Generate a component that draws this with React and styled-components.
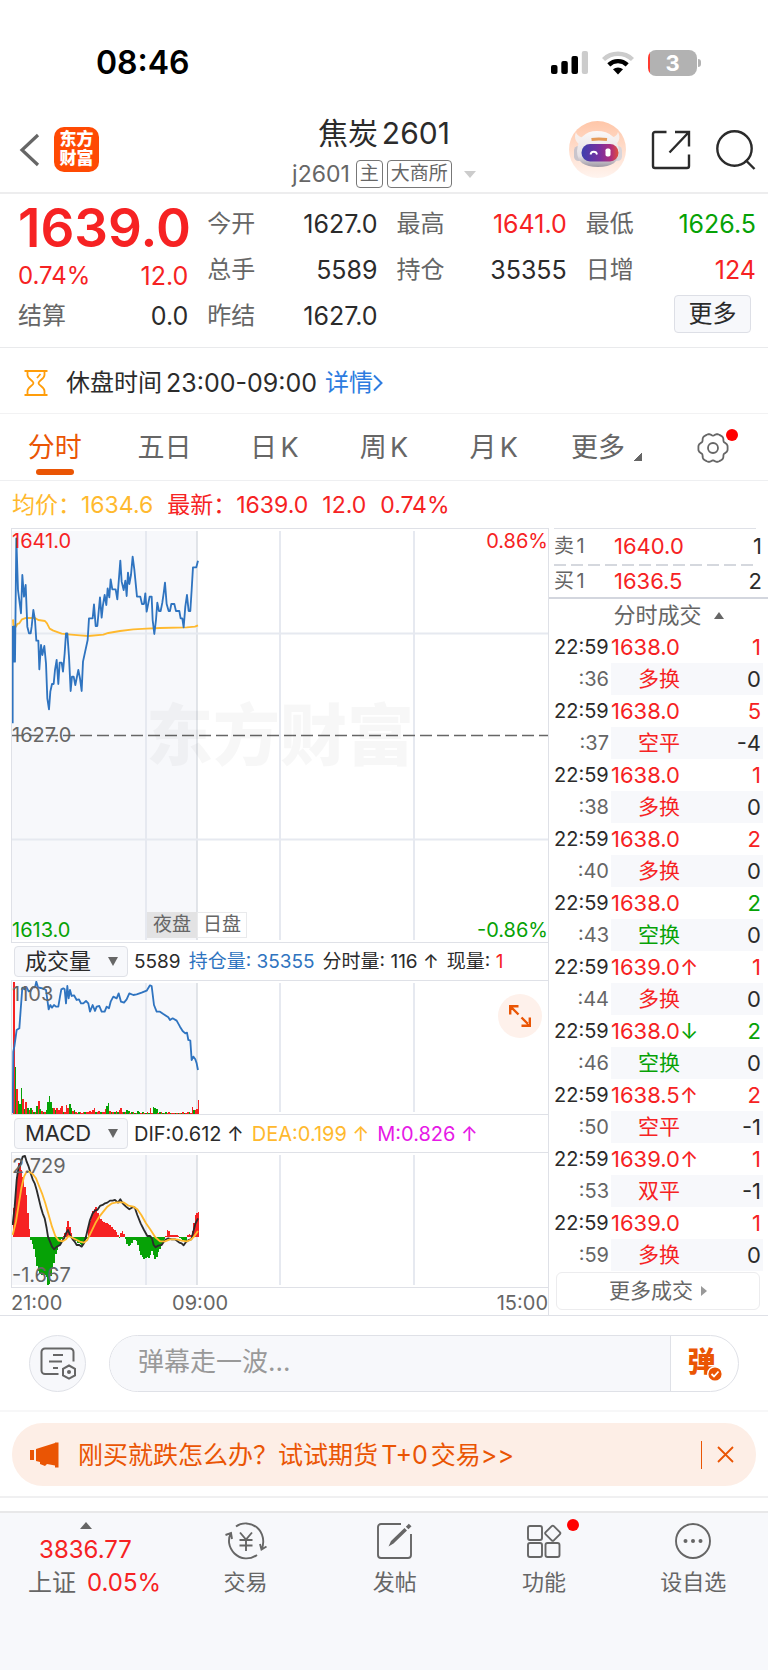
import React from "react";
import styled, { createGlobalStyle } from "styled-components";

const RED = "#f62223";
const GREEN = "#06a206";
const ORANGE = "#ea5504";
const BLUE = "#2f74c0";
const YELLOW = "#ffb92e";
const DARK = "#2b2b2b";
const GREY = "#666666";
const LINE = "#dfe1e7";
const GRID = "#e6e9f0";
const SHADE = "#f7f8fb";

const GlobalStyle = createGlobalStyle`
    * {
        box-sizing: border-box;
    }

    body {
        margin: 0;
        background: #ffffff;
        color: ${DARK};
        font-family: Inter, "Noto Sans CJK SC", sans-serif;
        font-size: 24px;
        text-autospace: normal;
    }

    button, input, select {
        font: inherit;
        color: inherit;
        margin: 0;
        padding: 0;
        border: 0;
        background: none;
    }

    a {
        color: inherit;
        text-decoration: none;
    }

    svg {
        display: block;
    }
`;

const Page = styled.div`
    display: flex;
    flex-direction: column;
    min-height: 100vh;
`;

/* status bar */

const StatusBar = styled.div`
    display: flex;
    align-items: center;
    justify-content: space-between;
    height: 101px;
    padding: 24px 67px 0 96px;
    color: #000000;
`;

const Clock = styled.div`
    font-size: 32px;
    font-weight: 600;
    line-height: 38px;
`;

const StatusIcons = styled.div`
    display: flex;
    align-items: center;
    gap: 14px;
`;

const Battery = styled.div`
    width: 49px;
    height: 26px;
    border-radius: 8px;
    overflow: hidden;
    background: linear-gradient(to right, #ff3b30 2px, #b2b2b2 2px);
    color: #ffffff;
    font-size: 22px;
    font-weight: 700;
    line-height: 26px;
    text-align: center;
`;

const BatteryGroup = styled.div`
    display: flex;
    align-items: center;
    gap: 1px;

    &::after {
        content: "";
        width: 3px;
        height: 8px;
        border-radius: 0 3px 3px 0;
        background: #b2b2b2;
    }
`;

/* header */

const Header = styled.header`
    display: grid;
    grid-template-columns: 1fr auto 1fr;
    height: 93px;
    padding: 0 12px;
    border-bottom: 2px solid #ededee;
`;

const HeaderSide = styled.div`
    display: flex;
    align-items: center;
    justify-content: ${(p) => (p.$end ? "flex-end" : "flex-start")};
    gap: ${(p) => (p.$end ? "25px" : "13px")};
    padding: 3px 0 0 6px;
`;

const IconButton = styled.button`
    display: block;
    cursor: pointer;
`;

const Logo = styled.div`
    width: 45px;
    height: 45px;
    border-radius: 10px;
    background: #ff4a03;
    color: #ffffff;
    font-size: 17px;
    font-weight: 900;
    line-height: 19px;
    padding: 3px 5px;
    text-align: center;
`;

const TitleBlock = styled.div`
    display: flex;
    flex-direction: column;
    align-items: center;
    padding-top: 12px;
`;

const Title = styled.h1`
    margin: 0;
    font-size: 30px;
    font-weight: 400;
    line-height: 40px;
`;

const SubTitle = styled.div`
    display: flex;
    align-items: center;
    gap: 4px;
    height: 42px;
    color: ${GREY};
    font-size: 23px;

    span:first-child {
        margin-right: 2px;
    }

    i {
        margin-left: 8px;
    }
`;

const Tag = styled.span`
    border: 1px solid #777777;
    border-radius: 4px;
    padding: 0 3px;
    font-size: 19px;
    line-height: 26px;
`;

const Triangle = styled.i`
    display: inline-block;
    width: 0;
    height: 0;
    border: ${(p) => p.$size || 5}px solid transparent;
    ${(p) =>
        p.$dir === "up" &&
        `border-top: 0; border-bottom: ${p.$long || 7}px solid ${p.$color || GREY};`}
    ${(p) =>
        p.$dir === "down" &&
        `border-bottom: 0; border-top: ${p.$long || 7}px solid ${p.$color || GREY};`}
    ${(p) =>
        p.$dir === "right" &&
        `border-right: 0; border-left: ${p.$long || 6}px solid ${p.$color || GREY};`}
`;

/* quote */

const Quote = styled.section`
    display: grid;
    grid-template-columns: repeat(4, minmax(0, 1fr));
    gap: 0 19px;
    height: 154px;
    padding: 7px 12px 0 18px;
    border-bottom: 1px solid #e9eaec;
`;

const QuoteColumn = styled.div`
    display: flex;
    flex-direction: column;
`;

const Price = styled.div`
    color: ${RED};
    font-size: 53px;
    font-weight: 600;
    line-height: 55px;
    white-space: nowrap;
`;

const Pair = styled.div`
    display: flex;
    align-items: center;
    justify-content: space-between;
    height: ${(p) => p.$height || 46}px;
    line-height: 32px;
    color: ${(p) => p.$color || DARK};

    span:first-child {
        color: ${(p) => p.$labelColor || GREY};
    }

    span:last-child {
        font-size: 25px;
    }
`;

const MoreButton = styled.button`
    align-self: flex-end;
    width: 77px;
    height: 38px;
    margin: 2px 5px 0 0;
    border: 1px solid #dddfe6;
    border-radius: 4px;
    background: ${SHADE};
    line-height: 34px;
`;

/* market notice */

const Notice = styled.div`
    display: flex;
    align-items: center;
    height: 66px;
    padding: 4px 24px 0;
    border-bottom: 1px solid #f2f2f3;
    line-height: 36px;

    svg {
        margin-right: 18px;
    }

    time {
        margin-left: 4px;
        font-size: 25px;
    }

    a {
        display: flex;
        align-items: center;
        margin-left: 8px;
        color: #2d7ce0;
    }

    a svg {
        margin: 0;
    }
`;

/* period tabs */

const Tabs = styled.nav`
    display: grid;
    grid-template-columns: repeat(7, 1fr);
    height: 67px;
    border-bottom: 1px solid #eeeff1;
`;

const Tab = styled.button`
    position: relative;
    display: flex;
    align-items: center;
    justify-content: center;
    gap: 9px;
    padding-top: 1px;
    color: ${(p) => (p.$active ? ORANGE : GREY)};
    font-size: 27px;
    line-height: 36px;

    &::after {
        content: "";
        display: ${(p) => (p.$active ? "block" : "none")};
        position: absolute;
        bottom: 5px;
        width: 38px;
        height: 6px;
        border-radius: 3px;
        background: ${ORANGE};
    }
`;

const Corner = styled.i`
    width: 8px;
    height: 8px;
    margin: 18px -6px 0 0;
    background: linear-gradient(135deg, transparent 50%, ${GREY} 50%);
`;

const Dot = styled.i`
    position: absolute;
    top: ${(p) => p.$top}px;
    left: calc(50% + ${(p) => p.$shift}px);
    width: 12px;
    height: 12px;
    border-radius: 6px;
    background: #ff0000;
`;

const Legend = styled.div`
    display: flex;
    align-items: center;
    gap: 14px;
    height: 47px;
    padding-left: 12px;
    color: ${RED};
    font-size: 23px;
    line-height: 30px;

    span:first-child {
        color: ${YELLOW};
    }
`;

/* charts */

const Board = styled.main`
    display: flex;
    border-bottom: 1px solid ${LINE};
`;

const Charts = styled.div`
    flex: 1;
    min-width: 0;
    padding-left: 11px;
    border-right: 1px solid ${LINE};
`;

const Plot = styled.div`
    position: relative;
    height: ${(p) => p.$height}px;
    border: 1px solid ${LINE};
    border-width: 1px 0 1px 1px;

    > svg {
        width: 100%;
        height: 100%;
    }
`;

const Mark = styled.span`
    position: absolute;
    ${(p) => (p.$bottom ? "bottom" : "top")}: ${(p) => p.$offset || 0}px;
    ${(p) => (p.$right ? "right: 0" : "left: 0")};
    color: ${(p) => p.$color || GREY};
    font-size: 20px;
    line-height: 24px;
`;

const Watermark = styled.div`
    position: absolute;
    top: 162px;
    left: 25%;
    color: rgba(0, 0, 0, 0.03);
    font-size: 67px;
    font-weight: 900;
    line-height: 90px;
    pointer-events: none;
`;

const Sessions = styled.div`
    position: absolute;
    left: 25%;
    bottom: 4px;
    display: flex;
    margin-left: 1px;
    color: ${GREY};
    font-size: 19px;
    line-height: 24px;

    span {
        padding: 0 5px;
        border: 1px solid #e9eaec;
        background: #ffffff;
    }

    span:first-child {
        border-color: #e3e3e4;
        background: #e3e3e4;
    }
`;

const IndicatorBar = styled.div`
    display: flex;
    align-items: center;
    gap: 6px;
    height: 37px;
    padding-left: 3px;
`;

const Readings = styled.div`
    display: flex;
    gap: 8px;
    font-size: ${(p) => (p.$large ? 20 : 19)}px;
    line-height: 28px;
    white-space: nowrap;
`;

const Picker = styled.label`
    position: relative;
    flex: none;
    width: 114px;
    height: 31px;

    select {
        width: 100%;
        height: 100%;
        padding-left: 10px;
        appearance: none;
        border: 1px solid ${LINE};
        border-radius: 4px;
        background: ${SHADE};
        font-size: 22px;
        line-height: 29px;
    }

    i {
        position: absolute;
        top: 11px;
        right: 10px;
    }
`;

const Tone = styled.span`
    color: ${(p) => p.$color || DARK};
`;

const Expand = styled.button`
    position: absolute;
    top: 13px;
    right: 6px;
    display: flex;
    align-items: center;
    justify-content: center;
    width: 44px;
    height: 44px;
    border-radius: 22px;
    background: #fef1eb;
`;

const Axis = styled.div`
    position: relative;
    display: flex;
    justify-content: space-between;
    height: 27px;
    color: ${GREY};
    font-size: 20px;
    line-height: 30px;

    span:nth-child(2) {
        position: absolute;
        left: 30%;
    }
`;

/* order book and trades */

const Side = styled.aside`
    display: flex;
    flex-direction: column;
    width: 219px;
`;

const Level = styled.div`
    display: grid;
    grid-template-columns: 60px 1fr auto;
    align-items: center;
    height: ${(p) => (p.$last ? 31 : 36)}px;
    margin: 0 12px 0 5px;
    padding-bottom: 2px;
    border-top: ${(p) => (p.$last ? 0 : 1)}px solid ${LINE};
    color: ${GREY};
    font-size: 20px;
    line-height: 28px;

    strong {
        color: ${RED};
        font-weight: 400;
        font-size: 22px;
    }

    em {
        margin-right: -6px;
        color: ${DARK};
        font-style: normal;
        font-size: 22px;
    }
`;

const Dashes = styled.hr`
    width: 202px;
    height: 2px;
    margin: 0 0 0 5px;
    border: 0;
    background: repeating-linear-gradient(
        to right,
        #d5d8de 0 12px,
        transparent 12px 17px
    );
`;

const TradesTitle = styled.h2`
    display: flex;
    align-items: center;
    justify-content: center;
    gap: 12px;
    height: 34px;
    margin: 0;
    padding-left: 20px;
    border-top: 2px solid #d3d6de;
    color: ${GREY};
    font-size: 22px;
    font-weight: 400;
    line-height: 32px;
`;

const Trades = styled.table`
    width: 209px;
    margin: 0 0 1px 5px;
    border-collapse: collapse;
    table-layout: fixed;
    font-size: 22px;

    td {
        height: 32px;
        padding: 0;
        line-height: 30px;
        white-space: nowrap;
    }

    td:first-child {
        width: 57px;
        font-size: 20px;
    }

    td:last-child {
        width: 32px;
        padding-right: 2px;
        text-align: right;
    }

    tr:nth-child(even) td {
        background: ${SHADE};
    }

    tr:nth-child(even) td:first-child {
        padding-right: 2px;
        background: none;
        color: ${GREY};
        text-align: right;
    }

    tr:nth-child(even) td:nth-child(2) {
        padding-left: 27px;
        font-size: 21px;
    }
`;

const TradeCell = styled.td`
    color: ${(p) => p.$color || DARK};
`;

const MoreTrades = styled.button`
    display: flex;
    align-items: center;
    justify-content: center;
    gap: 8px;
    height: 38px;
    margin: 0 8px 0 7px;
    border: 1px solid #ececee;
    border-radius: 6px;
    color: ${GREY};
    font-size: 21px;
    line-height: 30px;
`;

/* bullet chat */

const Chat = styled.form`
    display: flex;
    align-items: center;
    gap: 23px;
    height: 96px;
    padding: 0 29px;
    border-bottom: 2px solid #f7f7f8;
`;

const ChatSettings = styled.button`
    display: flex;
    align-items: center;
    justify-content: center;
    width: 57px;
    height: 57px;
    border: 1px solid ${LINE};
    border-radius: 29px;
    background: ${SHADE};
`;

const ChatBox = styled.div`
    flex: 1;
    display: flex;
    height: 57px;
    border: 1px solid ${LINE};
    border-radius: 29px;
    overflow: hidden;

    input {
        flex: 1;
        min-width: 0;
        padding: 0 28px 4px;
        background: ${SHADE};
        font-size: 26px;
        outline: none;
    }

    input::placeholder {
        color: #999999;
        opacity: 1;
    }
`;

const ChatToggle = styled.button`
    position: relative;
    width: 68px;
    padding: 0 6px 2px 0;
    border-left: 1px solid ${LINE};
    color: ${ORANGE};
    font-size: 28px;
    font-weight: 900;
    line-height: 36px;

    svg {
        position: absolute;
        right: 15px;
        bottom: 9px;
    }
`;

/* promotion */

const PromoWrap = styled.div`
    padding: 11px 12px 10px;
    border-bottom: 2px solid #f0f0f1;
`;

const Promo = styled.div`
    display: flex;
    align-items: center;
    height: 63px;
    padding: 0 22px 0 18px;
    border-radius: 31px;
    background: #fdeee6;
    color: ${ORANGE};
    font-size: 25px;

    a {
        flex: 1;
        margin-left: 18px;
        line-height: 36px;
    }

    button {
        padding-left: 15px;
        border-left: 1px solid ${ORANGE};
        height: 28px;
    }
`;

/* bottom navigation */

const BottomNav = styled.nav`
    flex: 1;
    display: grid;
    grid-template-columns: 171px repeat(4, 1fr);
    align-items: start;
    min-height: 160px;
    margin-top: 13px;
    border-top: 2px solid #e8e8e9;
    background: ${SHADE};
`;

const NavItem = styled.a`
    position: relative;
    display: flex;
    flex-direction: column;
    align-items: center;
    padding-top: 9px;
    color: ${GREY};
    font-size: 22px;
    line-height: 32px;

    svg {
        margin-bottom: 6px;
    }
`;

const IndexLine = styled.span`
    padding-left: ${(p) => (p.$label ? 18 : 0)}px;
    font-size: 24px;
    line-height: ${(p) => p.$height}px;
    color: ${(p) => (p.$label ? GREY : RED)};
    white-space: nowrap;

    b {
        margin-left: 8px;
        color: ${RED};
        font-weight: 400;
    }
`;

const quoteColumns = [
    [["今开", "1627.0"], ["总手", "5589"], ["昨结", "1627.0"]],
    [["最高", "1641.0", RED], ["持仓", "35355"]],
    [["最低", "1626.5", GREEN], ["日增", "124", RED]],
];

const periods = ["分时", "五日", "日K", "周K", "月K"];

// [time, price, arrow, volume, volume color, seconds, kind, kind color, change]
const trades = [
    ["22:59", "1638.0", "", "1", RED, ":36", "多换", RED, "0"],
    ["22:59", "1638.0", "", "5", RED, ":37", "空平", RED, "-4"],
    ["22:59", "1638.0", "", "1", RED, ":38", "多换", RED, "0"],
    ["22:59", "1638.0", "", "2", RED, ":40", "多换", RED, "0"],
    ["22:59", "1638.0", "", "2", GREEN, ":43", "空换", GREEN, "0"],
    ["22:59", "1639.0", "↑", "1", RED, ":44", "多换", RED, "0"],
    ["22:59", "1638.0", "↓", "2", GREEN, ":46", "空换", GREEN, "0"],
    ["22:59", "1638.5", "↑", "2", RED, ":50", "空平", RED, "-1"],
    ["22:59", "1639.0", "↑", "1", RED, ":53", "双平", RED, "-1"],
    ["22:59", "1639.0", "", "1", RED, ":59", "多换", RED, "0"],
];

// series are kept at three units per pixel
const priceLine =
    "38,640 38,350 42,350 42,455 45,455 49,85 54,240 63,310 67,195 72,260 77,225 82,350 87,370 92,370 95,350 100,300 105,330 109,392 115,392 118,478 123,405 127,435 133,408 138,460 142,565 147,598 151,545 156,522 161,522 165,480 170,450 175,522 179,458 185,458 189,485 194,430 198,370 202,370 207,440 212,543 216,500 221,500 226,525 231,500 235,480 240,505 245,543 249,455 263,390 267,325 278,325 282,283 287,348 292,348 300,262 305,323 309,285 314,255 319,285 323,235 328,262 332,208 337,238 347,238 352,268 361,152 365,215 371,240 376,212 380,258 384,188 388,222 393,195 398,140 403,178 411,260 421,260 426,282 432,282 436,250 440,305 449,260 455,260 458,330 463,372 468,330 472,278 477,303 482,303 487,278 491,250 495,218 500,282 506,303 510,303 514,282 523,282 528,303 538,303 542,325 547,325 551,352 556,290 561,255 566,303 571,303 575,240 579,172 589,172 594,152";

const averageLine =
    "39,328 40,345 48,350 52,342 58,340 66,328 78,324 105,324 115,330 135,333 141,340 149,356 160,362 185,371 205,373 240,376 265,378 310,374 325,369 360,363 400,358 440,356 480,354 560,352 585,350 594,346";

const interestLine =
    "38,640 40,455 43,440 50,390 58,385 62,330 67,263 73,268 80,262 86,274 92,272 98,262 105,262 109,245 114,262 122,264 130,266 138,270 146,328 151,315 156,323 162,315 168,320 175,320 180,290 184,268 190,265 194,268 198,310 202,258 206,295 210,270 215,288 222,286 230,300 237,298 243,310 250,310 258,303 265,310 270,335 278,315 285,333 290,320 298,318 305,335 314,335 320,320 327,325 332,305 340,290 350,295 356,280 363,305 372,308 380,298 388,280 400,285 410,283 425,278 440,272 450,256 455,258 462,315 470,335 480,335 490,342 505,352 510,360 518,355 530,362 540,380 548,393 556,400 561,398 565,420 571,422 575,480 580,470 586,478 590,490 594,510";

const difLine =
    "38,975 44,920 50,840 56,800 62,790 68,770 75,768 80,785 86,800 92,820 98,838 104,850 110,870 116,895 122,920 128,940 134,955 140,985 144,1010 150,1025 156,1040 162,1048 168,1042 180,1035 186,1025 192,1015 198,1000 204,990 210,1005 218,1018 224,1025 230,1035 238,1035 245,1040 252,1030 258,1010 264,985 270,960 278,940 285,932 292,930 300,918 308,915 315,910 322,908 330,902 338,902 345,900 354,908 361,898 368,910 378,920 388,928 398,922 404,922 412,945 422,970 432,990 442,1008 450,1008 456,1015 461,1035 467,1042 475,1037 485,1035 495,1020 505,1015 515,1018 525,1018 538,1028 545,1030 551,1036 558,1026 566,1020 574,1018 580,995 586,972 594,955";

const deaLine =
    "38,1005 48,965 56,915 64,865 72,830 80,815 88,815 98,822 108,835 116,855 126,880 136,910 146,945 156,980 166,1008 176,1022 188,1024 198,1018 206,1008 214,1012 226,1018 240,1025 252,1028 262,1020 274,995 286,970 298,950 310,935 322,920 336,910 350,907 370,907 385,917 400,920 412,928 424,945 438,970 452,990 466,1012 480,1024 495,1024 510,1018 530,1018 545,1022 560,1024 572,1020 582,1010 594,993";

// positive bars are red, negative ones green
const volumes = [
    396, -141, 76, -39, -32, -79, 46, -16, 36, -20, 12, -18, 14, -8, 6, -26,
    40, -16, 10, -8, 8, -12, -38, -56, -38, -18, 18, -12, 20, 14, 18, 24, -8,
    8, 28, 18, -30, -18, 10, -12, 8, 5, -6, 7, 5, 8, -6, 8, 7, 10, 8, 12, 18,
    -8, 6, 10, -6, 8, 6, 16, -24, -34, 10, -8, 8, -6, 10, -8, 14, 18, 6, -8,
    6, -12, -10, 5, -7, 6, -4, 5, -10, -6, 4, -7, 5, -4, 8, -5, 20, 4, -22,
    -20, -16, 4, -6, 7, -4, 5, -7, 4, 6, -3, 3, 5, -4, 3, -5, 4, -4, 6, -5, 4,
    7, -6, 5, 22, -12, 12, 16, 42,
];

const macdBars = [
    85, 130, 180, 222, 220, 200, 180, 150, 125, 70, 22, -10, -22, -38, -60,
    -88, -102, -110, -115, -112, -115, -120, -145, -142, -118, -95, -80, -52,
    -40, -28, -18, -8, 3, 10, 30, 48, 30, 12, -4, -10, -14, -18, -20, -22,
    -24, -20, -14, -8, 24, 46, 62, 78, 82, 90, 72, 60, 54, 48, 44, 42, 40, 37,
    34, 30, 24, 20, 14, 4, -3, 10, 18, 8, -8, -22, -28, -26, -20, -10, -10,
    -12, -26, -44, -54, -60, -66, -64, -62, -64, -54, -44, -56, -66, -62, -46,
    -36, -28, -18, -6, 2, 20, 16, 6, 4, 5, 6, 6, 3, -5, -8, -10, -12, -14, 4,
    8, 6, 16, 40, 66, 72, 74,
];

const Bars = ({ values, base, upright }) => (
    <g shapeRendering="crispEdges">
        {values.map((v, i) => (
            <rect
                key={i}
                x={39 + i * 4.66}
                y={v > 0 || upright ? base - Math.abs(v) : base}
                width={5}
                height={Math.abs(v)}
                fill={v > 0 ? RED : GREEN}
            />
        ))}
    </g>
);

const Grid = ({ height }) => (
    <>
        <rect x="0" y="2" width="185" height={height - 4} fill={SHADE} />
        <path
            d={`M134 2V${height - 2}M268 2V${height - 2}M402 2V${height - 2}`}
            stroke={GRID}
            strokeWidth="2"
        />
        <path d={`M185 2V${height - 2}`} stroke="#d9dce2" strokeWidth="1.5" />
    </>
);

const Series = ({ points, color }) => (
    <polyline
        points={points}
        fill="none"
        stroke={color}
        strokeWidth="5.5"
        strokeLinejoin="round"
    />
);

const SignalIcon = () => (
    <svg width="37" height="23" viewBox="0 0 37 23">
        <rect x="0" y="14" width="6.5" height="9" rx="2" />
        <rect x="10.3" y="10" width="6.5" height="13" rx="2" />
        <rect x="20.5" y="5" width="6.5" height="18" rx="2" />
        <rect x="30.8" y="0" width="6.2" height="23" rx="2" fill="#cccccc" />
    </svg>
);

const WifiIcon = () => (
    <svg width="32" height="24" viewBox="0 0 32 24">
        <path
            d="M1.5 8.5a21 21 0 0 1 29 0"
            fill="none"
            stroke="#cccccc"
            strokeWidth="4.4"
        />
        <path
            d="M6.8 13.8a13.4 13.4 0 0 1 18.4 0"
            fill="none"
            stroke="#000000"
            strokeWidth="4.4"
        />
        <path d="M11 18.3a7.5 7.5 0 0 1 10 0L16 23.4z" />
    </svg>
);

const BackIcon = () => (
    <svg width="23" height="34" viewBox="0 0 23 34">
        <path
            d="M20 2 4 17l16 15"
            fill="none"
            stroke={GREY}
            strokeWidth="3.2"
        />
    </svg>
);

const RobotIcon = () => (
    <svg width="57" height="57" viewBox="0 0 57 57">
        <defs>
            <linearGradient id="sky" x2="0" y2="1">
                <stop offset="0" stopColor="#ffc6a8" />
                <stop offset="1" stopColor="#fff4ef" />
            </linearGradient>
            <linearGradient id="shell" x2="0" y2="1">
                <stop offset="0" stopColor="#fbf8f7" />
                <stop offset="0.7" stopColor="#e4e0e4" />
                <stop offset="1" stopColor="#9d97a3" />
            </linearGradient>
            <linearGradient id="visor">
                <stop offset="0" stopColor="#3c3fae" />
                <stop offset="0.5" stopColor="#7a2f9e" />
                <stop offset="0.8" stopColor="#b02e7c" />
                <stop offset="1" stopColor="#e0523a" />
            </linearGradient>
        </defs>
        <circle cx="28.5" cy="28.5" r="28.5" fill="url(#sky)" />
        <path
            d="M7 11c-2.5 6 0 11 5 13l5-8c-5 1-9-1-10-5zM49 11c3 6 1 11-4 13l-5-8c5 1 8-1 9-5z"
            fill="#f7efec"
        />
        <rect x="5" y="25" width="9" height="15" rx="4.5" fill="#c9c5cc" />
        <rect x="44" y="25" width="9" height="15" rx="4.5" fill="#d9d5da" />
        <path
            d="M28 10c13 0 21 7 22 20 0 11-7 16-21 16S8 41 8 30c1-13 8-20 20-20z"
            fill="url(#shell)"
        />
        <path d="M22.5 18.5q7-1 15.5 0" fill="none" stroke="#e59a58" strokeWidth="2.8" />
        <rect x="12.5" y="23" width="37" height="17.5" rx="8.5" fill="url(#visor)" />
        <path
            d="M21.5 33.5a3.3 3.3 0 0 1 6.5 0"
            fill="none"
            stroke="#ffffff"
            strokeWidth="1.8"
        />
        <rect x="36.5" y="27.5" width="5" height="8" rx="1.8" fill="#ffffff" />
    </svg>
);

const ShareIcon = () => (
    <svg width="40" height="40" viewBox="0 0 40 40">
        <path
            d="M15.5 2H4a2 2 0 0 0-2 2v32a2 2 0 0 0 2 2h32a2 2 0 0 0 2-2V24.5M24 2h14v14.5M38 2 18.5 22.5"
            fill="none"
            stroke={DARK}
            strokeWidth="2.4"
        />
    </svg>
);

const SearchIcon = () => (
    <svg width="40" height="40" viewBox="0 0 40 40">
        <g fill="none" stroke={DARK} strokeWidth="2.4">
            <circle cx="18.5" cy="18.5" r="17.2" />
            <path d="m29.5 30 9 9" />
        </g>
    </svg>
);

const HourglassIcon = () => (
    <svg width="24" height="26" viewBox="0 0 24 26">
        <g fill="none" stroke="#ff9d0a" strokeWidth="1.8">
            <path d="M.5 1h23M.5 25h23M3.5 1v4c0 4 6 5.5 6 8s-6 4-6 8v4M20.5 1v4c0 4-6 5.5-6 8s6 4 6 8v4M16.5 4l-3.5 4" />
        </g>
    </svg>
);

// rim of the gear: a circle with six flattened lobes
const gearRim = Array.from({ length: 72 }, (_, i) => {
    const a = (i * Math.PI) / 36;
    const r = 13.9 + 1.1 * Math.cos(6 * a) - 0.4 * Math.cos(12 * a);
    return `${(16 + r * Math.cos(a)).toFixed(2)},${(15 + r * Math.sin(a)).toFixed(2)}`;
}).join(" ");

const GearIcon = () => (
    <svg width="32" height="30" viewBox="0 0 32 30">
        <g fill="none" stroke={GREY} strokeWidth="1.8" strokeLinejoin="round">
            <polygon points={gearRim} />
            <circle cx="16" cy="15" r="5" />
        </g>
    </svg>
);

const ExpandIcon = () => (
    <svg width="22" height="22" viewBox="0 0 22 22">
        <path
            d="M1.2 9.5V1.2h8.3M1.5 1.5l8 8M20.8 12.5v8.3h-8.3M20.5 20.5l-8-8"
            fill="none"
            stroke={ORANGE}
            strokeWidth="2.4"
        />
    </svg>
);

const ChatSettingsIcon = () => (
    <svg width="36" height="33" viewBox="0 0 36 33">
        <g fill="none" stroke={GREY} strokeWidth="2">
            <path d="M18.5 27H5a3.5 3.5 0 0 1-3.5-3.5V5A3.5 3.5 0 0 1 5 1.5h25A3.5 3.5 0 0 1 33.5 5v9.5M13 8h10M9 14.5h13M13 21h5" />
            <path d="m29 18.5 6 3.3v6.6l-6 3.3-6-3.3v-6.6z" />
        </g>
        <circle cx="29" cy="25" r="2" fill={GREY} />
    </svg>
);

const CheckIcon = () => (
    <svg width="16" height="16" viewBox="0 0 16 16">
        <circle cx="8" cy="8" r="7.3" fill={ORANGE} stroke="#ffffff" strokeWidth="1.4" />
        <path d="m4.5 8 2.5 2.5 4.5-5" fill="none" stroke="#ffffff" strokeWidth="1.8" />
    </svg>
);

const HornIcon = () => (
    <svg width="30" height="26" viewBox="0 0 30 26">
        <path
            d="M0 8h4v10H0zM6 7l19-6V.5h3.5v25H25v-2l-8-1.5-2 2-5-2v-2l-4-1z"
            fill={ORANGE}
        />
    </svg>
);

const CloseIcon = () => (
    <svg width="17" height="17" viewBox="0 0 17 17">
        <path d="m1 1 15 15M16 1 1 16" stroke={ORANGE} strokeWidth="1.8" />
    </svg>
);

const TradeIcon = () => (
    <svg width="42" height="38" viewBox="0 0 42 38">
        <g fill="none" stroke={GREY} strokeWidth="1.9">
            <path d="M11 4.5C17 0 26 .5 32 5.5s8 14.500 4.500 22M32 33C25 38 15.500 37.500 9.500 31.500S2.500 17.500 6 11M.5 13l5.500-2 1 6M41.500 24.500l-5 3-1.500-5.500" />
            <path d="m15 10.500 6 7 6-7M21 17.500V29M14.500 18h13M14.500 23.500h13" />
        </g>
    </svg>
);

const PostIcon = () => (
    <svg width="38" height="38" viewBox="0 0 38 38">
        <path
            d="M25 2H5a3 3 0 0 0-3 3v28a3 3 0 0 0 3 3h27a3 3 0 0 0 3-3V12"
            fill="none"
            stroke={GREY}
            strokeWidth="1.9"
        />
        <path
            d="M12.5 24.5 15 19 28.5 6l2.5 2.5L17.5 21.5zM29.8 4.8l3-3 2.7 2.5-3 3z"
            fill={GREY}
        />
    </svg>
);

const FunctionsIcon = () => (
    <svg width="38" height="38" viewBox="0 0 38 38">
        <g fill="none" stroke={GREY} strokeWidth="1.9">
            <rect x="3" y="4" width="14" height="14" rx="2" />
            <rect x="3" y="21" width="14" height="14" rx="2" />
            <rect x="20.5" y="21" width="14" height="14" rx="2" />
            <rect
                x="22"
                y="5.5"
                width="11.5"
                height="11.5"
                rx="1.5"
                transform="rotate(45 27.75 11.25)"
            />
        </g>
    </svg>
);

const DotsIcon = () => (
    <svg width="38" height="38" viewBox="0 0 38 38">
        <circle cx="19" cy="19" r="17" fill="none" stroke={GREY} strokeWidth="1.9" />
        <g fill={GREY}>
            <circle cx="11.5" cy="19" r="2" />
            <circle cx="19" cy="19" r="2" />
            <circle cx="26.5" cy="19" r="2" />
        </g>
    </svg>
);

const navItems = [
    ["交易", TradeIcon],
    ["发帖", PostIcon],
    ["功能", FunctionsIcon, true],
    ["设自选", DotsIcon],
];

export const App = () => (
    <Page>
        <GlobalStyle />
        <StatusBar>
            <Clock>08:46</Clock>
            <StatusIcons>
                <SignalIcon />
                <WifiIcon />
                <BatteryGroup>
                    <Battery>3</Battery>
                </BatteryGroup>
            </StatusIcons>
        </StatusBar>

        <Header>
            <HeaderSide>
                <IconButton aria-label="返回">
                    <BackIcon />
                </IconButton>
                <Logo>
                    东方
                    <br />
                    财富
                </Logo>
            </HeaderSide>
            <TitleBlock>
                <Title>焦炭2601</Title>
                <SubTitle>
                    <span>j2601</span>
                    <Tag>主</Tag>
                    <Tag>大商所</Tag>
                    <Triangle $dir="down" $size={6} $color="#cccccc" />
                </SubTitle>
            </TitleBlock>
            <HeaderSide $end>
                <IconButton aria-label="助手">
                    <RobotIcon />
                </IconButton>
                <IconButton aria-label="分享">
                    <ShareIcon />
                </IconButton>
                <IconButton aria-label="搜索">
                    <SearchIcon />
                </IconButton>
            </HeaderSide>
        </Header>

        <Quote>
            <QuoteColumn>
                <Price>1639.0</Price>
                <Pair $height={40} $color={RED} $labelColor={RED}>
                    <span>0.74%</span>
                    <span>12.0</span>
                </Pair>
                <Pair $height={40}>
                    <span>结算</span>
                    <span>0.0</span>
                </Pair>
            </QuoteColumn>
            {quoteColumns.map((rows, i) => (
                <QuoteColumn key={i}>
                    {rows.map(([label, value, color]) => (
                        <Pair key={label} $color={color}>
                            <span>{label}</span>
                            <span>{value}</span>
                        </Pair>
                    ))}
                    {i === 2 && <MoreButton>更多</MoreButton>}
                </QuoteColumn>
            ))}
        </Quote>

        <Notice>
            <HourglassIcon />
            休盘时间
            <time>23:00-09:00</time>
            <a href="#detail">
                详情
                <svg width="10" height="18" viewBox="0 0 10 18">
                    <path
                        d="m1 1.5 7.5 7.5L1 16.5"
                        fill="none"
                        stroke="#2d7ce0"
                        strokeWidth="2"
                    />
                </svg>
            </a>
        </Notice>

        <Tabs>
            {periods.map((name, i) => (
                <Tab key={name} $active={i === 0}>
                    {name}
                </Tab>
            ))}
            <Tab>
                更多
                <Corner />
            </Tab>
            <Tab aria-label="设置">
                <GearIcon />
                <Dot $top={15} $shift={13} />
            </Tab>
        </Tabs>

        <Legend>
            <span>均价：1634.6</span>
            <span>最新：1639.0</span>
            <span>12.0</span>
            <span>0.74%</span>
        </Legend>

        <Board>
            <Charts>
                <Plot $height={415}>
                    <svg viewBox="0 0 536 413" preserveAspectRatio="none">
                        <Grid height={413} />
                        <path
                            d="M0 104.5H536M0 310.5H536"
                            stroke={GRID}
                            strokeWidth="2"
                        />
                        <path
                            d="M0 206.5H536"
                            stroke={GREY}
                            strokeWidth="1.5"
                            strokeDasharray="12 5"
                        />
                        <g transform="translate(-12 -19) scale(0.3333)">
                            <Series points={averageLine} color={YELLOW} />
                            <Series points={priceLine} color={BLUE} />
                        </g>
                    </svg>
                    <Watermark>东方财富</Watermark>
                    <Mark $color={RED}>1641.0</Mark>
                    <Mark $color={RED} $right>
                        0.86%
                    </Mark>
                    <Mark $offset={194}>1627.0</Mark>
                    <Mark $color={GREEN} $bottom>
                        1613.0
                    </Mark>
                    <Mark $color={GREEN} $bottom $right>
                        -0.86%
                    </Mark>
                    <Sessions>
                        <span>夜盘</span>
                        <span>日盘</span>
                    </Sessions>
                </Plot>

                <IndicatorBar>
                    <Picker>
                        <select aria-label="副图指标一">
                            <option>成交量</option>
                        </select>
                        <Triangle $dir="down" $size={5} $long={9} />
                    </Picker>
                    <Readings>
                        <Tone>5589</Tone>
                        <Tone $color={BLUE}>持仓量: 35355</Tone>
                        <Tone>分时量: 116 ↑</Tone>
                        <Tone>
                            现量: <Tone $color={RED}>1</Tone>
                        </Tone>
                    </Readings>
                </IndicatorBar>

                <Plot $height={135}>
                    <svg viewBox="0 0 536 133" preserveAspectRatio="none">
                        <Grid height={133} />
                        <g transform="translate(-12 -81) scale(0.3333)">
                            <Bars values={volumes} base={643} upright />
                            <Series points={interestLine} color={BLUE} />
                        </g>
                    </svg>
                    <Mark $offset={1}>1103</Mark>
                    <Expand aria-label="放大">
                        <ExpandIcon />
                    </Expand>
                </Plot>

                <IndicatorBar>
                    <Picker>
                        <select aria-label="副图指标二">
                            <option>MACD</option>
                        </select>
                        <Triangle $dir="down" $size={5} $long={9} />
                    </Picker>
                    <Readings $large>
                        <Tone>DIF:0.612 ↑</Tone>
                        <Tone $color={YELLOW}>DEA:0.199 ↑</Tone>
                        <Tone $color="#e619e6">M:0.826 ↑</Tone>
                    </Readings>
                </IndicatorBar>

                <Plot $height={136}>
                    <svg viewBox="0 0 536 134" preserveAspectRatio="none">
                        <Grid height={134} />
                        <g transform="translate(-12 -253) scale(0.3333)">
                            <Bars values={macdBars} base={1010} />
                            <Series points={difLine} color={DARK} />
                            <Series points={deaLine} color={YELLOW} />
                        </g>
                    </svg>
                    <Mark $offset={1}>2.729</Mark>
                    <Mark $bottom>-1.667</Mark>
                </Plot>
                <Axis>
                    <span>21:00</span>
                    <span>09:00</span>
                    <span>15:00</span>
                </Axis>
            </Charts>

            <Side>
                <Level>
                    <span>卖1</span>
                    <strong>1640.0</strong>
                    <em>1</em>
                </Level>
                <Dashes />
                <Level $last>
                    <span>买1</span>
                    <strong>1636.5</strong>
                    <em>2</em>
                </Level>
                <TradesTitle>
                    分时成交
                    <Triangle $dir="up" />
                </TradesTitle>
                <Trades>
                    <tbody>
                        {trades.map(([time, price, arrow, vol, volColor, sec, kind, kindColor, change]) => (
                            <React.Fragment key={sec}>
                                <tr>
                                    <td>{time}</td>
                                    <TradeCell $color={RED}>
                                        {price}
                                        <Tone $color={volColor}>{arrow}</Tone>
                                    </TradeCell>
                                    <TradeCell $color={volColor}>{vol}</TradeCell>
                                </tr>
                                <tr>
                                    <td>{sec}</td>
                                    <TradeCell $color={kindColor}>{kind}</TradeCell>
                                    <TradeCell>{change}</TradeCell>
                                </tr>
                            </React.Fragment>
                        ))}
                    </tbody>
                </Trades>
                <MoreTrades>
                    更多成交
                    <Triangle $dir="right" $color="#999999" />
                </MoreTrades>
            </Side>
        </Board>

        <Chat onSubmit={(e) => e.preventDefault()}>
            <ChatSettings type="button" aria-label="弹幕设置">
                <ChatSettingsIcon />
            </ChatSettings>
            <ChatBox>
                <input type="text" aria-label="弹幕" placeholder="弹幕走一波..." />
                <ChatToggle type="button">
                    弹
                    <CheckIcon />
                </ChatToggle>
            </ChatBox>
        </Chat>

        <PromoWrap>
            <Promo>
                <HornIcon />
                <a href="#promo">刚买就跌怎么办？试试期货T+0交易&gt;&gt;</a>
                <button aria-label="关闭">
                    <CloseIcon />
                </button>
            </Promo>
        </PromoWrap>

        <BottomNav>
            <NavItem href="#index">
                <Triangle $dir="up" $size={6} />
                <IndexLine $height={42}>3836.77</IndexLine>
                <IndexLine $height={24} $label>
                    上证<b>0.05%</b>
                </IndexLine>
            </NavItem>
            {navItems.map(([label, Icon, dot]) => (
                <NavItem key={label} href={`#${label}`}>
                    <Icon />
                    {label}
                    {dot && <Dot $top={6} $shift={23} />}
                </NavItem>
            ))}
        </BottomNav>
    </Page>
);

export default App;
